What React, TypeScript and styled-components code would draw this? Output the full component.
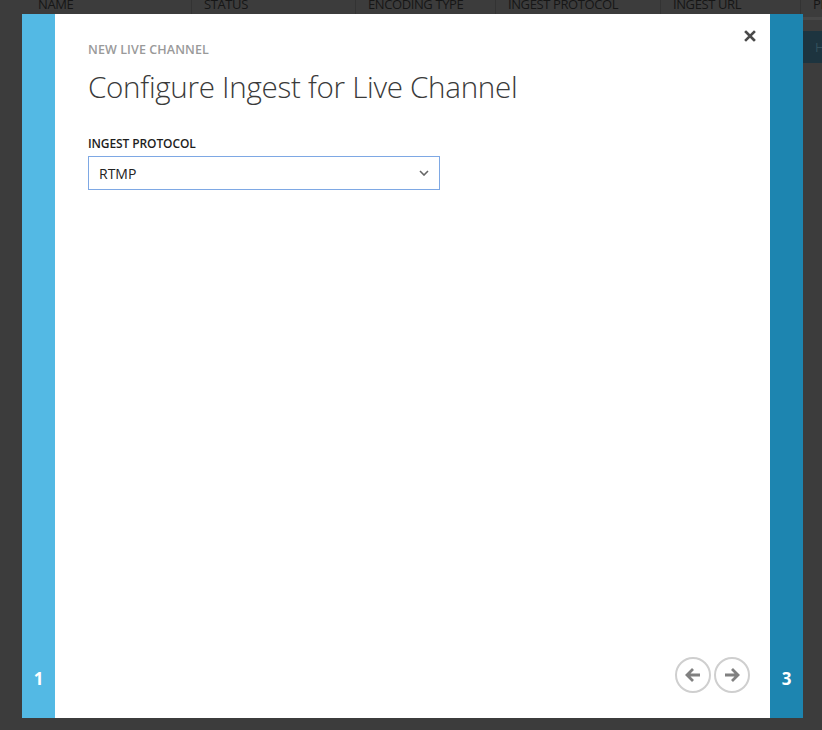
import React from "react";
import styled, { createGlobalStyle } from "styled-components";

const GlobalStyle = createGlobalStyle`
  html, body {
    margin: 0;
    padding: 0;
    background: #3c3c3c;
    font-family: "Open Sans", "Noto Sans", sans-serif;
  }
  * { box-sizing: border-box; }
`;

const Page = styled.div`
  position: relative;
  width: 822px;
  height: 730px;
  overflow: hidden;
  background: #3c3c3c;
`;

const HeaderRow = styled.div`
  display: grid;
  grid-template-columns: 191px 164px 140px 165px 140px 1fr;
  height: 14px;
  overflow: hidden;
`;

const HeaderCell = styled.div<{ $first?: boolean }>`
  padding-left: ${(p) => (p.$first ? "38px" : "12px")};
  border-left: ${(p) => (p.$first ? "none" : "1px solid #333")};
  color: #161616;
  font-size: 13px;
  line-height: 13px;
  margin-top: -2px;
  white-space: nowrap;
  letter-spacing: -0.4px;
`;

const TableBody = styled.div`
  padding-left: 700px;
`;

const TableLine = styled.div`
  height: 3px;
  margin-top: 3px;
  background: #474747;
`;

const TableRow = styled.div`
  height: 32px;
  margin-top: 11px;
  background: #1d343f;
  color: #34505c;
  font-size: 13px;
  line-height: 32px;
  padding-left: 115px;
`;

const Dialog = styled.div`
  position: absolute;
  left: 22px;
  top: 14px;
  width: 781px;
  height: 704px;
  display: flex;
  background: #fff;
`;

const Rail = styled.div<{ $color: string }>`
  width: 33px;
  flex-shrink: 0;
  background: ${(p) => p.$color};
  display: flex;
  align-items: flex-end;
  justify-content: center;
  padding-bottom: 28px;
  color: #fff;
  font-size: 17px;
  font-weight: 700;
`;

const Content = styled.div`
  position: relative;
  flex: 1;
  display: flex;
  flex-direction: column;
  padding: 28px 20px 25px 33px;
`;

const CloseButton = styled.div`
  position: absolute;
  top: 14px;
  right: 12px;
  width: 16px;
  height: 16px;
  display: flex;
  align-items: center;
  justify-content: center;
`;

const Eyebrow = styled.div`
  color: #9a9a9a;
  font-size: 12.5px;
  font-weight: 600;
  letter-spacing: 0.1px;
  line-height: 16px;
`;

const Title = styled.h1`
  margin: 11px 0 0;
  color: #3a3a3a;
  font-size: 29.6px;
  font-weight: 300;
  line-height: 36px;
  letter-spacing: -0.3px;
`;

const FieldLabel = styled.div`
  margin-top: 31px;
  color: #1e1e1e;
  font-size: 12px;
  font-weight: 600;
  line-height: 16px;
  letter-spacing: -0.1px;
`;

const Select = styled.div`
  margin-top: 4px;
  width: 352px;
  height: 34px;
  border: 1px solid #7ea8e4;
  display: flex;
  align-items: center;
  justify-content: space-between;
  padding: 0 10px 0 10px;
  color: #222;
  font-size: 14px;
`;

const Spacer = styled.div`
  flex: 1;
`;

const Footer = styled.div`
  display: flex;
  justify-content: flex-end;
  gap: 3px;
`;

const NavButton = styled.div`
  width: 36px;
  height: 36px;
  border-radius: 50%;
  border: 2px solid #cfcfcf;
  display: flex;
  align-items: center;
  justify-content: center;
`;

const columns = ["NAME", "STATUS", "ENCODING TYPE", "INGEST PROTOCOL", "INGEST URL", "PREVIEW"];

export default function App() {
  return (
    <Page>
      <GlobalStyle />
      <HeaderRow>
        {columns.map((c, i) => (
          <HeaderCell key={c} $first={i === 0}>
            {c}
          </HeaderCell>
        ))}
      </HeaderRow>
      <TableBody>
        <TableLine />
        <TableRow>H</TableRow>
      </TableBody>

      <Dialog>
        <Rail $color="#53b9e4">1</Rail>
        <Content>
          <CloseButton>
            <svg width="12" height="12" viewBox="0 0 12 12">
              <path d="M2 2 L10 10 M10 2 L2 10" stroke="#4a4a4a" strokeWidth="2.6" strokeLinecap="square" />
            </svg>
          </CloseButton>
          <Eyebrow>NEW LIVE CHANNEL</Eyebrow>
          <Title>Configure Ingest for Live Channel</Title>
          <FieldLabel>INGEST PROTOCOL</FieldLabel>
          <Select>
            <span>RTMP</span>
            <svg width="10" height="6" viewBox="0 0 10 6">
              <path d="M1 1 L5 5 L9 1" stroke="#666" strokeWidth="1.6" fill="none" />
            </svg>
          </Select>
          <Spacer />
          <Footer>
            <NavButton>
              <svg width="18" height="16" viewBox="0 0 18 16">
                <path d="M16 8 H3 M9 2 L3 8 L9 14" stroke="#808080" strokeWidth="2.8" fill="none" />
              </svg>
            </NavButton>
            <NavButton>
              <svg width="18" height="16" viewBox="0 0 18 16">
                <path d="M2 8 H15 M9 2 L15 8 L9 14" stroke="#808080" strokeWidth="2.8" fill="none" />
              </svg>
            </NavButton>
          </Footer>
        </Content>
        <Rail $color="#1d85b0">3</Rail>
      </Dialog>
    </Page>
  );
}
